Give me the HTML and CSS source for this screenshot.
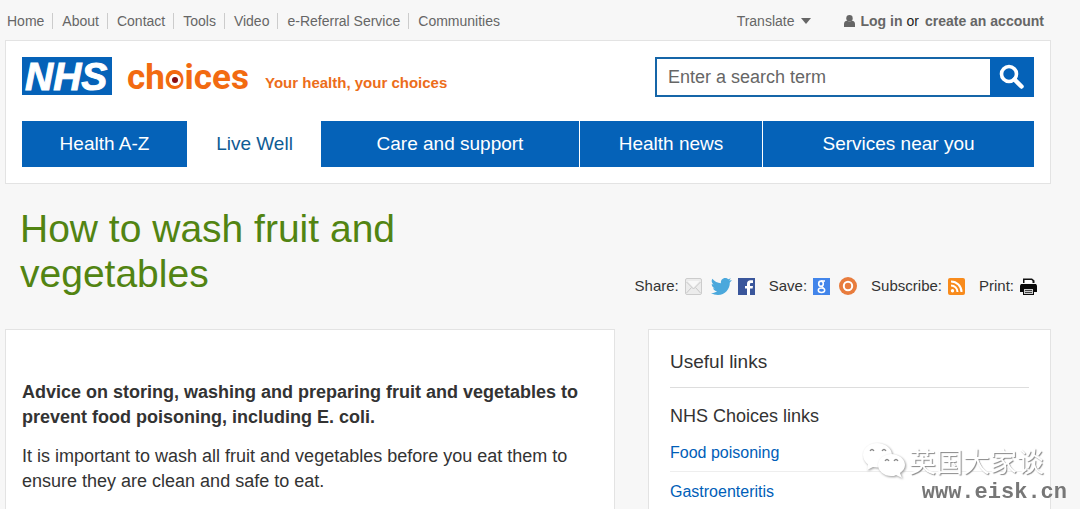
FILE: index.html
```html
<!DOCTYPE html>
<html lang="en">
<head>
    <meta charset="UTF-8">
    <meta name="viewport" content="width=device-width, initial-scale=1.0">
    <title>How to wash fruit and vegetables - Live Well - NHS Choices</title>
    <link rel="stylesheet" href="styles.css">
</head>
<body>
    <div class="top-bar">
        <ul class="top-links">
            <li><a href="#">Home</a></li>
            <li><a href="#">About</a></li>
            <li><a href="#">Contact</a></li>
            <li><a href="#">Tools</a></li>
            <li><a href="#">Video</a></li>
            <li><a href="#">e-Referral Service</a></li>
            <li><a href="#">Communities</a></li>
        </ul>
        <div class="account">
            <button type="button" class="translate">Translate
                <svg width="10" height="6" viewBox="0 0 10 6"><path d="M0 0h10L5 6z" fill="#666"/></svg>
            </button>
            <svg class="user-icon" width="11" height="12" viewBox="0 0 11 12" fill="#666"><circle cx="5.500" cy="3.200" r="3.200"/><path d="M0 12V9q0-3 3-3.200 2.500 1.600 5 0Q11 6 11 9v3z"/></svg>
            <a href="#">Log in</a>
            <span class="or">or</span>
            <a href="#">create an account</a>
        </div>
    </div>

    <header class="header">
        <div class="header-row">
            <a href="#" class="logo" aria-label="NHS Choices">
                <svg width="228" height="38" viewBox="0 0 228 38">
                    <rect width="90" height="38" fill="#0562b8"/>
                    <text x="3" y="33" class="logo-nhs">NHS</text>
                    <text x="105" y="32" class="logo-choices">choices</text>
                    <circle cx="153" cy="23" r="6" fill="#fff"/>
                    <circle cx="153" cy="23" r="3" fill="#8a0c12"/>
                </svg>
            </a>
            <p class="tagline">Your health, your choices</p>
            <form class="search">
                <input type="text" class="search-input" placeholder="Enter a search term" aria-label="Enter a search term">
                <button type="submit" class="search-btn" aria-label="Search">
                    <svg width="26" height="26" viewBox="0 0 26 26" fill="none" stroke="#fff"><circle cx="10" cy="10" r="7.500" stroke-width="3.600"/><path d="M15.500 15.500l7 7" stroke-width="4.500" stroke-linecap="round"/></svg>
                </button>
            </form>
        </div>
        <nav class="main-nav">
            <a href="#">Health A-Z</a>
            <a href="#" class="active">Live Well</a>
            <a href="#">Care and support</a>
            <a href="#">Health news</a>
            <a href="#">Services near you</a>
        </nav>
    </header>

    <div class="title-row">
        <h1>How to wash fruit and vegetables</h1>
        <div class="tools">
            <div class="tool-group">
                <span>Share:</span>
                <a href="#" class="first-icon" aria-label="Email">
                    <svg width="17" height="17" viewBox="0 0 17 17"><rect x=".5" y=".5" width="16" height="16" rx="1.500" fill="#ececec" stroke="#ccc"/><path d="M1.500 4l7 7 7-7M1.500 15l5-5.500M15.500 15l-5-5.500" fill="none" stroke="#c8c8c8"/><path d="M2.500 3h12L8.500 9.500z" fill="#f8f8f8"/></svg>
                </a>
                <a href="#" aria-label="Twitter">
                    <svg width="21" height="17" viewBox="0 0 21 17"><path d="M21 2.200l-2.200 2.300C19 11 14 17 7 17c-2.600 0-5-.7-7-2 2.400.2 4.400-.4 6.100-1.700-2-.1-3.400-1.300-4-3h1.900C2 9.700.7 8 .7 5.900c.6.300 1.200.5 1.900.5C.7 5 .1 2.800 1.300.7 3.500 3.300 6.500 5 10 5.200 9.400 2.300 11.500 0 14.200 0c1.200 0 2.300.5 3.100 1.300L20 .3l-1.800 2.300z" fill="#4ba8dc"/></svg>
                </a>
                <a href="#" class="tight" aria-label="Facebook">
                    <svg width="17" height="17" viewBox="0 0 17 17"><rect width="17" height="17" fill="#3a569b"/><path d="M9 17v-6.500H7V8h2V6c0-2.500 1.300-3.700 3.500-3.700H15v2.600h-1.600c-1.100 0-1.400.4-1.400 1.400V8h3l-.4 2.500H12V17z" fill="#fff"/></svg>
                </a>
            </div>
            <div class="tool-group">
                <span>Save:</span>
                <a href="#" class="first-icon" aria-label="Google bookmark">
                    <svg width="17" height="17" viewBox="0 0 17 17"><rect width="17" height="17" fill="#4285ea"/><g fill="none" stroke="#fff"><ellipse cx="8" cy="5.700" rx="2.300" ry="2.600" stroke-width="1.600"/><ellipse cx="8.500" cy="12.300" rx="3.200" ry="2.200" stroke-width="1.500"/><path d="M8 3h4M9 8.300l1.500 2" stroke-width="1.300"/></g></svg>
                </a>
                <a href="#" aria-label="Save to NHS Choices">
                    <svg width="18" height="18" viewBox="0 0 18 18"><circle cx="9" cy="9" r="9" fill="#e87c3d"/><circle cx="9" cy="9" r="4.200" fill="none" stroke="#fff" stroke-width="2"/></svg>
                </a>
            </div>
            <div class="tool-group">
                <span>Subscribe:</span>
                <a href="#" class="first-icon" aria-label="RSS">
                    <svg width="17" height="17" viewBox="0 0 17 17"><rect width="17" height="17" rx="2" fill="#f88b1c"/><circle cx="4.500" cy="12.700" r="1.700" fill="#fff"/><path d="M3 7.500a6.500 6.500 0 0 1 6.500 6.500M3 3.500A10.500 10.500 0 0 1 13.500 14" fill="none" stroke="#fff" stroke-width="2"/></svg>
                </a>
            </div>
            <div class="tool-group">
                <span>Print:</span>
                <a href="#" class="first-icon" aria-label="Print">
                    <svg width="17" height="17" viewBox="0 0 17 17"><path d="M3 .5h9l2.500 2V5H3z" fill="#111"/><path d="M4.500 2h7l1 1v2h-8z" fill="#fff"/><path d="M1 6h15l1 1.500V14H0V7.500z" fill="#0a0a0a"/><path d="M3 10h11v7H3z" fill="#0a0a0a"/><path d="M4 11h9v5H4z" fill="#ccc"/><path d="M5 12.500h7M5 14.500h7" stroke="#444"/></svg>
                </a>
            </div>
        </div>
    </div>

    <div class="columns">
        <main class="article">
            <p class="intro">Advice on storing, washing and preparing fruit and vegetables to prevent food poisoning, including E. coli.</p>
            <p>It is important to wash all fruit and vegetables before you eat them to ensure they are clean and safe to eat.</p>
        </main>
        <aside class="useful-links">
            <h2>Useful links</h2>
            <h3>NHS Choices links</h3>
            <ul>
                <li><a href="#">Food poisoning</a></li>
                <li><a href="#">Gastroenteritis</a></li>
            </ul>
        </aside>
    </div>

    <!-- Watermark over the bottom right corner -->
    <div class="watermark">
        <div class="watermark-name">
            <svg width="44" height="38" viewBox="0 0 44 38" fill="#fff">
                <path class="bubble" d="M15 1C7 1 1 6 1 13c0 4 2 7 5 9.500L5 28l6-3c10 2 19-3 19-12C30 6 23 1 15 1z"/>
                <path class="bubble" d="M29 12c-7 0-13 5-13 11s6 11 13 11c2 0 4 0 5-1l6 3-2-5c3-2 5-5 5-8 0-6-6-11-14-11z"/>
                <g fill="none" stroke="#888" stroke-width="1.300"><path d="M8 9q2-3 4 0M20 9q2-3 4 0M23 19q2-3 4 0M32 19q2-3 4 0"/></g>
            </svg>
            <span lang="zh">英国大家谈</span>
        </div>
        <div class="watermark-url">www.eisk.cn</div>
    </div>
</body>
</html>
```

FILE: styles.css
```css
* { box-sizing: border-box; }
body { display: flex; flex-direction: column; min-height: 100vh; margin: 0; padding: 0 29px 0 5px; background: #f7f7f7; color: #333; font-family: "Liberation Sans", Arial, sans-serif; }
a { color: #005eb8; text-decoration: none; }
a:hover { text-decoration: underline; }
svg { display: block; overflow: visible; }
h1, h2, h3, p, ul { margin: 0; padding: 0; font-weight: normal; }
ul { list-style: none; }

/* top bar */
.top-bar { display: flex; justify-content: space-between; align-items: center; height: 40px; padding: 2px 7px 0 2px; font-size: 14px; line-height: 16px; }
.top-bar a { color: #666; }
.top-links { display: flex; }
.top-links li { padding: 0 8px 0 9px; border-right: 1px solid #ccc; }
.top-links li:first-child { padding-left: 0; }
.top-links li:last-child { border-right: 0; }
.account { display: flex; align-items: center; }
.account a { font-weight: bold; }
.translate { display: flex; align-items: center; gap: 7px; margin-right: 33px; padding: 0; border: 0; background: none; color: #666; font: inherit; cursor: pointer; }
.user-icon { margin-right: 5px; }
.or { margin: 0 6px 0 4px; color: #222; }

/* header */
.header { padding: 16px; border: 1px solid #e3e3e3; background: #fff; }
.header-row { display: flex; align-items: flex-start; margin-bottom: 24px; }
.logo-nhs { fill: #fff; stroke: #fff; stroke-width: 1px; font: italic bold 39px "Liberation Sans", Arial, sans-serif; }
.logo-choices { fill: #f26a11; font: bold 35px Roboto, sans-serif; }
.tagline { margin: 17px 0 0 15px; color: #ec6d1a; font-size: 15px; font-weight: bold; line-height: 18px; }
.search { display: flex; width: 379px; height: 40px; margin-left: auto; }
.search-input { flex: 1; min-width: 0; padding: 0 11px; border: 2px solid #1565a8; border-right: 0; border-radius: 0; background: #fff; color: #666; font: 18px "Liberation Sans", Arial, sans-serif; }
.search-input::placeholder { color: #666; opacity: 1; }
.search-btn { display: flex; align-items: center; justify-content: center; width: 44px; padding: 0; border: 0; background: #0562b8; cursor: pointer; }
.main-nav { display: grid; grid-template-columns: 165fr 134fr 258fr 183fr 272fr; }
.main-nav a { padding: 11px 0 12px; border-left: 1px solid #fff; background: #0562b8; color: #fff; font-size: 19px; line-height: 23px; text-align: center; }
.main-nav a:first-child, .main-nav .active + a { border-left: 0; }
.main-nav .active { background: #fff; color: #0f5c94; }

/* title and tools */
.title-row { display: flex; justify-content: space-between; align-items: flex-end; padding: 22px 14px 33px 15px; }
h1 { max-width: 400px; color: #528412; font-size: 39px; line-height: 45px; }
.tools { display: flex; gap: 14px; font-size: 15px; line-height: 20px; }
.tool-group { display: flex; align-items: center; }
.tool-group a { margin-left: 9px; }
.tool-group .first-icon, .tool-group .tight { margin-left: 6px; }

/* content */
.columns { display: grid; flex: 1; grid-template-columns: 610fr 403fr; gap: 33px; }
.article, .useful-links { border: 1px solid #e3e3e3; border-bottom: 0; background: #fff; }
.article { padding: 50px 16px 0; font-size: 18px; line-height: 25px; }
.intro { margin-bottom: 14px; font-weight: bold; }
.useful-links { padding: 20px 21px 0; }
h2 { padding-bottom: 13px; border-bottom: 1px solid #ddd; font-size: 19px; line-height: 24px; }
h3 { margin: 16px 0 5px; font-size: 18px; line-height: 24px; }
.useful-links li { padding: 10px 0 9px; font-size: 16px; line-height: 19px; }
.useful-links li + li { border-top: 1px solid #eee; }

/* watermark */
.watermark { position: fixed; right: 13px; bottom: 3px; display: flex; flex-direction: column; align-items: flex-end; color: #777; pointer-events: none; }
.watermark-name { display: flex; align-items: center; gap: 3px; margin-right: 23px; color: #fff; font: 27px/36px "Noto Sans CJK SC", sans-serif; text-shadow: 1px 1px 1px #888; }
.bubble { filter: drop-shadow(1px 1px 1px #999); }
.watermark-url { font: bold 22px/26px "Liberation Mono", monospace; }
```
